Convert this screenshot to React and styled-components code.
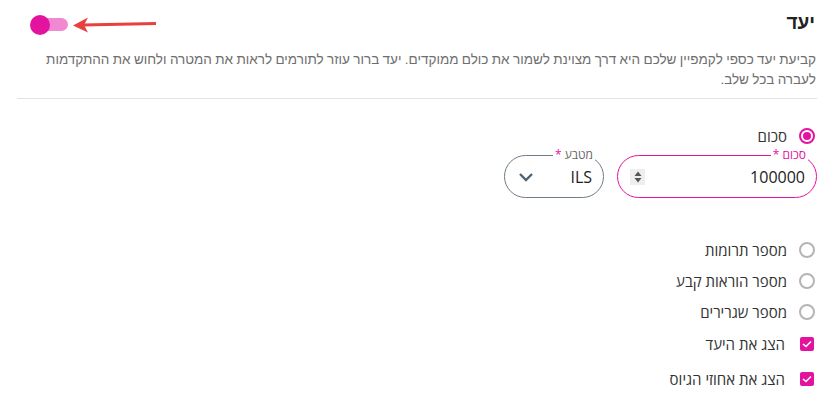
import React from 'react';
import styled, { createGlobalStyle } from 'styled-components';

const Global = createGlobalStyle`
  body {
    margin: 0;
    background: #fff;
    font-family: 'Open Sans', 'Liberation Sans', sans-serif;
  }
`;

const PINK = '#e4139f';

const Page = styled.div`
  direction: rtl;
  width: 800px;
  padding: 11px 14px 0 17px;
`;

const Header = styled.div`
  display: flex;
  justify-content: space-between;
  align-items: center;
  height: 24px;
`;

const Title = styled.h2`
  margin: 0;
  font-family: 'Liberation Sans', sans-serif;
  font-size: 19px;
  font-weight: 700;
  color: #222;
  padding-right: 2px;
`;

const ToggleWrap = styled.div`
  display: flex;
  align-items: center;
  gap: 5px;
  direction: ltr;
  margin-left: 13px;
  margin-top: 3px;
`;

const Track = styled.div`
  width: 38px;
  height: 20px;
  display: flex;
  align-items: center;
  position: relative;
`;

const TrackBar = styled.div`
  width: 30px;
  height: 13px;
  margin-left: 8px;
  border-radius: 7px;
  background: #f287d2;
`;

const Thumb = styled.div`
  position: absolute;
  left: 0;
  top: 0;
  width: 20px;
  height: 20px;
  border-radius: 50%;
  background: ${PINK};
`;

const Desc = styled.p`
  margin: 15px 0 0;
  font-family: 'Liberation Sans', sans-serif;
  font-size: 13.5px;
  word-spacing: -0.4px;
  line-height: 20px;
  color: #6e6e6e;
  padding-right: 1px;
`;

const Divider = styled.hr`
  margin: 8px 0 0;
  border: 0;
  border-top: 1px solid #e3e3e3;
`;

const Form = styled.div`
  padding-top: 26px;
`;

const Option = styled.label`
  display: flex;
  align-items: center;
  gap: 12px;
  height: ${(p) => p.h || 31}px;
  font-size: 15px;
  color: #333;
  padding-right: 1px;
`;

const Radio = styled.span`
  width: 16px;
  height: 16px;
  box-sizing: border-box;
  border-radius: 50%;
  border: 2px solid ${(p) => (p.checked ? PINK : '#b5b5b5')};
  display: flex;
  align-items: center;
  justify-content: center;
  margin-right: 1px;
  &::after {
    content: '';
    width: 8px;
    height: 8px;
    border-radius: 50%;
    background: ${PINK};
    display: ${(p) => (p.checked ? 'block' : 'none')};
  }
`;

const Check = styled.span`
  width: 14px;
  height: 14px;
  border-radius: 2px;
  background: ${PINK};
  display: flex;
  align-items: center;
  justify-content: center;
  margin-right: 2px;
  margin-left: 3px;
`;

const Fields = styled.div`
  display: flex;
  gap: 13px;
  margin-top: 1px;
  margin-bottom: 36px;
`;

const Field = styled.fieldset`
  margin: 0;
  box-sizing: border-box;
  width: ${(p) => p.w}px;
  height: 50px;
  padding: 0 11px 0 12px;
  border: 1px solid ${(p) => (p.active ? PINK : '#6e7a84')};
  border-radius: 22px;
  display: flex;
  align-items: center;
  gap: 8px;
`;

const Legend = styled.legend`
  font-size: 12px;
  line-height: 14px;
  color: ${(p) => (p.active ? PINK : '#666')};
  padding: 0 2px;
  margin-right: ${(p) => p.mr || 0}px;
  span {
    color: ${PINK};
  }
`;

const Value = styled.div`
  flex: 1;
  font-size: 16px;
  color: #222;
  margin-top: -6px;
`;

const Spinner = styled.div`
  width: 15px;
  height: 16px;
  background: #eeeeee;
  display: flex;
  align-items: center;
  justify-content: center;
  margin-top: -6px;
`;

const Chevron = styled.div`
  display: flex;
  margin-top: -6px;
  margin-left: 1px;
`;

const CheckMark = () => (
  <svg width="10" height="8" viewBox="0 0 10 8">
    <path d="M1 4 L4 6.5 L9 1.5" fill="none" stroke="#fff" strokeWidth="1.6" />
  </svg>
);

export default function App() {
  return (
    <>
      <Global />
      <Page>
        <Header>
          <Title>יעד</Title>
          <ToggleWrap>
            <Track>
              <TrackBar />
              <Thumb />
            </Track>
            <svg width="84" height="18" viewBox="0 0 84 18">
              <line x1="10" y1="9" x2="83" y2="7.5" stroke="#e8403f" strokeWidth="3.2" />
              <path d="M0 9.5 L15 1.5 L11 9 L15 16.5 Z" fill="#e8403f" />
            </svg>
          </ToggleWrap>
        </Header>
        <Desc>
          קביעת יעד כספי לקמפיין שלכם היא דרך מצוינת לשמור את כולם ממוקדים. יעד ברור עוזר לתורמים לראות את המטרה ולחוש את ההתקדמות לעברה בכל שלב.
        </Desc>
        <Divider />
        <Form>
          <Option h={22}>
            <Radio checked />
            סכום
          </Option>
          <Fields>
            <Field w={200} active>
              <Legend active mr={-3}>
                סכום <span>*</span>
              </Legend>
              <Value>100000</Value>
              <Spinner>
                <svg width="8" height="12" viewBox="0 0 8 12">
                  <path d="M4 0.5 L7.5 5 L0.5 5 Z M4 11.5 L7.5 7 L0.5 7 Z" fill="#555" />
                </svg>
              </Spinner>
            </Field>
            <Field w={100}>
              <Legend mr={-3}>
                מטבע <span>*</span>
              </Legend>
              <Value>ILS</Value>
              <Chevron>
                <svg width="16" height="10" viewBox="0 0 16 10">
                  <path d="M2 2 L8 8 L14 2" fill="none" stroke="#4c6478" strokeWidth="2.4" />
                </svg>
              </Chevron>
            </Field>
          </Fields>
          <Option>
            <Radio />
            מספר תרומות
          </Option>
          <Option>
            <Radio />
            מספר הוראות קבע
          </Option>
          <Option h={32}>
            <Radio />
            מספר שגרירים
          </Option>
          <Option h={32}>
            <Check>
              <CheckMark />
            </Check>
            הצג את היעד
          </Option>
          <Option h={38}>
            <Check>
              <CheckMark />
            </Check>
            הצג את אחוזי הגיוס
          </Option>
        </Form>
      </Page>
    </>
  );
}
